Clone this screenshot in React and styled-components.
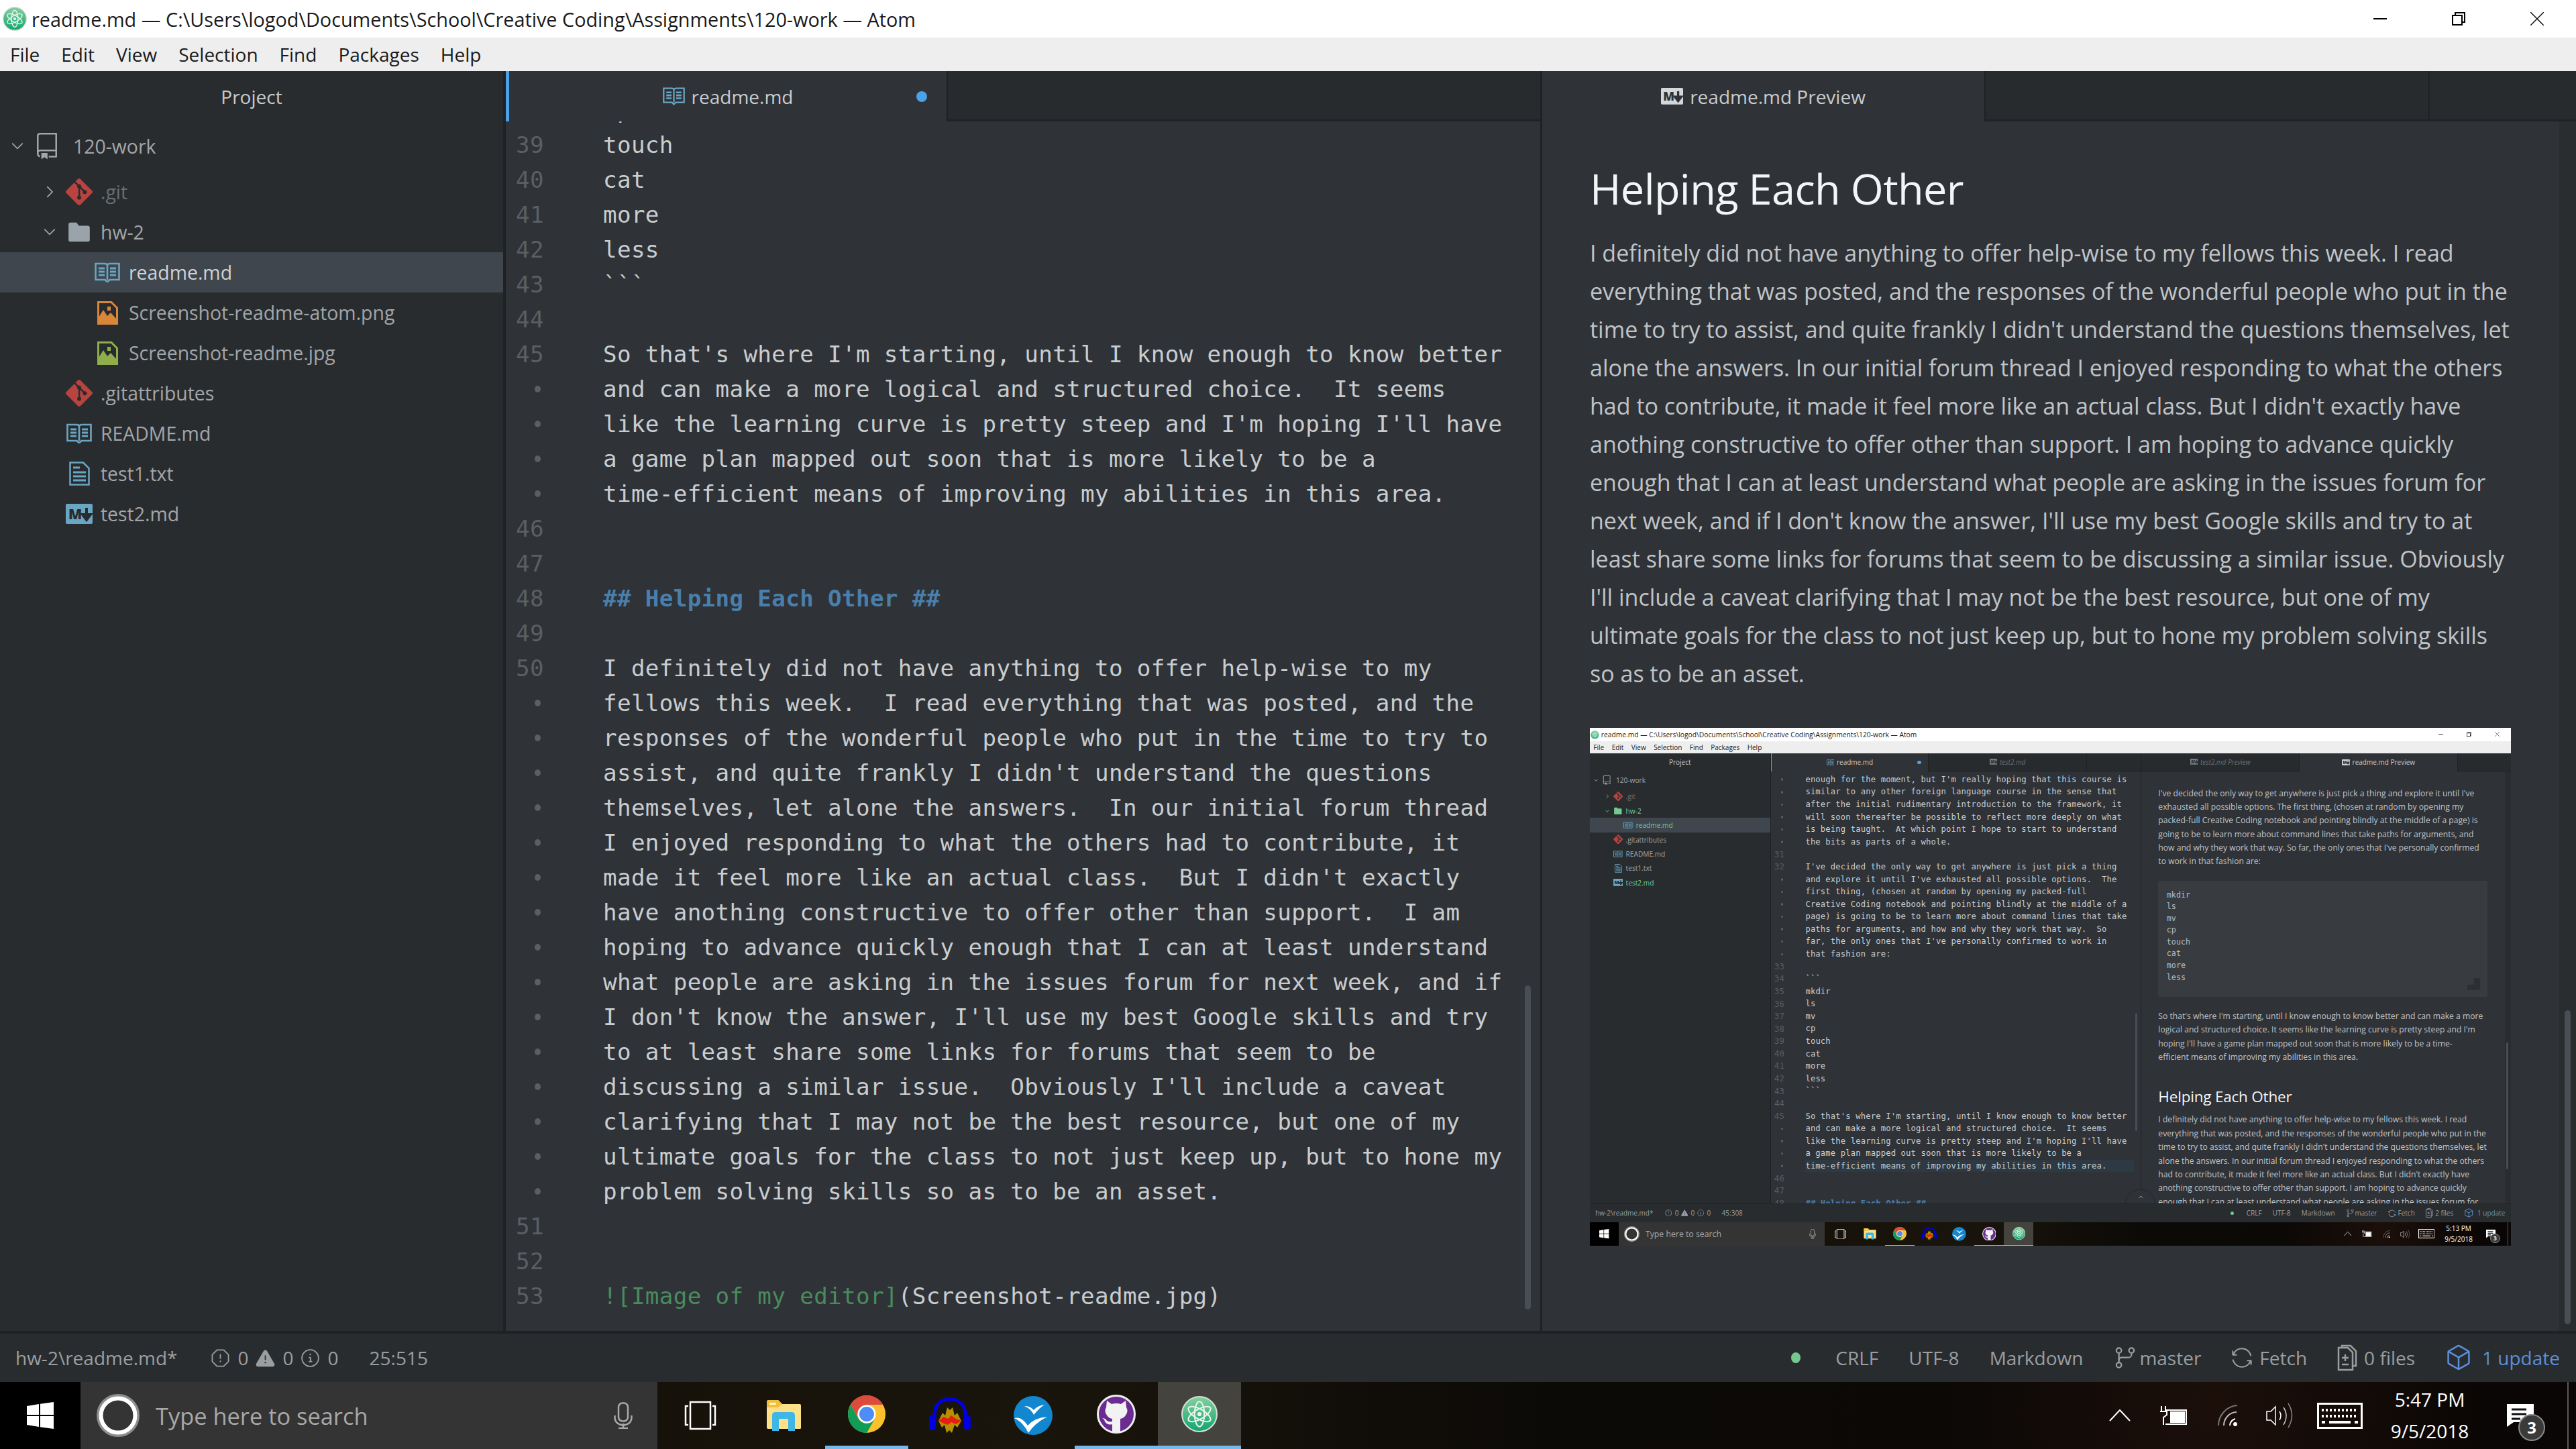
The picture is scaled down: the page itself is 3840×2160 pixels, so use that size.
import React from "react";
import styled, { createGlobalStyle } from "styled-components";
import {
  GoRepo, GoGitBranch, GoSync, GoPackage, GoStop, GoInfo, GoAlertFill,
  GoChevronDown, GoChevronRight, GoChevronUp, GoFileDirectoryFill,
} from "react-icons/go";
import { SiGit } from "react-icons/si";

const UI = `"Open Sans", "Noto Sans", sans-serif`;
const MONO = `"DejaVu Sans Mono", "Liberation Mono", monospace`;

const GlobalStyle = createGlobalStyle`
  html, body { margin: 0; padding: 0; background: #2f3237; }
  * { box-sizing: border-box; }
`;

/* ---------- window chrome ---------- */

const Desktop = styled.div`
  width: 3840px;
  height: 2160px;
  display: flex;
  flex-direction: column;
  overflow: hidden;
  font-family: ${UI};
`;

const TitleBar = styled.div`
  height: 56px;
  flex: none;
  background: #fff;
  display: flex;
  align-items: center;
  padding-left: 4px;
  color: #1a1a1a;
  font-size: 28.8px;
`;

const TitleText = styled.span`
  margin-left: 7px;
  white-space: pre;
  flex: 1;
`;

const WinButton = styled.div`
  width: 117px;
  height: 56px;
  display: flex;
  align-items: center;
  justify-content: center;
`;

const MenuBar = styled.div`
  height: 50px;
  flex: none;
  background: #eeeeee;
  display: flex;
  align-items: center;
  gap: 32px;
  padding-left: 15px;
  color: #1a1a1a;
  font-size: 28px;
`;

const Main = styled.div`
  flex: 1;
  min-height: 0;
  display: flex;
  position: relative;
`;

const Sidebar = styled.div`
  width: 754px;
  flex: none;
  background: #292c2f;
  border-right: 4px solid #1f2225;
  color: #a3a6a9;
  font-size: 28.4px;
`;

const SideTitle = styled.div`
  height: 75px;
  display: flex;
  align-items: center;
  justify-content: center;
  color: #c8cbcd;
  font-size: 28px;
  margin-bottom: 7px;
`;

const Row = styled.div`
  height: 60px;
  display: flex;
  align-items: center;
  padding-left: ${(p) => p.$indent}px;
  margin-bottom: ${(p) => (p.$root ? 8 : 0)}px;
  background: ${(p) => (p.$selected ? "#3f464d" : "transparent")};
  color: ${(p) => p.$color || "#a3a6a9"};
`;

const Twist = styled.span`
  width: 40px;
  flex: none;
  display: flex;
  justify-content: center;
  padding-right: 9px;
  color: ${(p) => p.$color || "#a3a6a9"};
`;

const RowIcon = styled.span`
  width: 40px;
  height: 40px;
  flex: none;
  display: flex;
  align-items: center;
  justify-content: center;
  color: ${(p) => p.$color};
`;

const RowLabel = styled.span`
  margin-left: ${(p) => (p.$root ? 19 : 12)}px;
  white-space: pre;
`;

const Pane = styled.div`
  width: ${(p) => p.$width}px;
  flex: ${(p) => (p.$width ? "none" : "1")};
  min-width: 0;
  display: flex;
  flex-direction: column;
  background: #2f3237;
  border-right: ${(p) => (p.$split ? "3px solid #1f2225" : "none")};
  position: relative;
`;

const TabBar = styled.div`
  height: 75px;
  flex: none;
  display: flex;
  background: #282b2e;
`;

const TabRest = styled.div`
  flex: 1;
  border-bottom: 3px solid #1f2225;
`;

const Tab = styled.div`
  width: ${(p) => p.$width}px;
  flex: none;
  position: relative;
  display: flex;
  align-items: center;
  justify-content: center;
  gap: 10px;
  font-size: 28px;
  color: ${(p) => (p.$active ? "#c8cbcd" : "#6a6e72")};
  font-style: ${(p) => (p.$active ? "normal" : "italic")};
  background: ${(p) => (p.$active ? "#2f3237" : "#282b2e")};
  border-bottom: ${(p) => (p.$active ? "none" : "3px solid #1f2225")};
  border-left: ${(p) => (p.$accent ? "5px solid #4aa3e8" : "none")};
  border-right: 2px solid #1f2225;
  white-space: pre;
`;

const TabDot = styled.span`
  position: absolute;
  right: 29px;
  top: 30px;
  width: 16px;
  height: 16px;
  border-radius: 50%;
  background: #4aa3e8;
`;

/* ---------- editor ---------- */

const Editor = styled.div`
  flex: 1;
  min-height: 0;
  overflow: hidden;
  position: relative;
  font-family: ${MONO};
  font-size: 34.2px;
  letter-spacing: 0.36px;
  color: #c9cdcf;
`;

const Lines = styled.div`
  margin-top: ${(p) => p.$offset}px;
`;

const Line = styled.div`
  height: 52px;
  display: flex;
  align-items: center;
  padding-right: 28px;
`;

const LineNo = styled.span`
  width: 57px;
  flex: none;
  text-align: right;
  color: #5b5f63;
`;

const WrapDot = styled.span`
  width: 52px;
  flex: none;
  display: flex;
  justify-content: flex-end;
  margin-right: 5px;
  &::after {
    content: "";
    width: 9px;
    height: 10px;
    border-radius: 50%;
    background: #5b5f63;
  }
`;

const Code = styled.span`
  flex: 1;
  height: 52px;
  line-height: 52px;
  margin-left: 88px;
  white-space: pre;
  background: ${(p) => (p.$highlight ? "#2e3a43" : "transparent")};
`;

const Token = styled.span`
  color: ${(p) => (p.$kind === "head" ? "#4a7fab" : p.$kind === "link" ? "#4a8b5d" : "inherit")};
  font-weight: ${(p) => (p.$kind === "head" ? 700 : 400)};
`;

const ScrollThumb = styled.div`
  position: absolute;
  right: ${(p) => p.$right}px;
  top: ${(p) => p.$top}px;
  height: ${(p) => p.$height}px;
  width: 9px;
  border-radius: 5px;
  background: #484e54;
`;

const PeekButton = styled.div`
  position: absolute;
  left: 2233px;
  bottom: 0;
  width: 126px;
  height: 60px;
  border-radius: 63px 63px 0 0;
  background: #2f3237;
  border: 2px solid #24272a;
  border-bottom: none;
  display: flex;
  justify-content: center;
  padding-top: 14px;
  color: #a3a6a9;
`;

/* ---------- preview ---------- */

const PreviewBody = styled.div`
  flex: 1;
  min-height: 0;
  display: flex;
`;

const PreviewScroll = styled.div`
  flex: 1;
  min-width: 0;
  overflow: hidden;
  padding: ${(p) => p.$top}px 0 0 71px;
  color: #c0c4c7;
  font-size: 34px;
`;

const H1 = styled.h1`
  margin: 96px 0 28px;
  font-size: 63px;
  line-height: 80px;
  font-weight: 400;
  color: #f4f5f6;
  white-space: pre;
  letter-spacing: -0.6px;
  &:first-child { margin-top: 0; }
`;

const Para = styled.p`
  margin: 0 0 52px;
`;

const ParaLine = styled.span`
  display: block;
  height: 57px;
  line-height: 57px;
  white-space: pre;
`;

const CodeBlock = styled.pre`
  position: relative;
  width: 1373px;
  height: 484px;
  margin: 0 0 52px;
  padding: 35px 0 0 35px;
  border-radius: 6px;
  background: #383c41;
  font-family: ${MONO};
  font-size: 32.6px;
  line-height: 49px;
  color: #b9bdc0;
`;

const CornerMark = styled.svg`
  position: absolute;
  right: 31px;
  bottom: 28px;
`;

const Shot = styled.div`
  width: 1373px;
  height: 772px;
  overflow: hidden;
`;

const ShotZoom = styled.div`
  zoom: 0.35755;
  filter: blur(1px);
`;

const ScrollTrack = styled.div`
  width: 25px;
  flex: none;
  background: #2a2d30;
  padding-top: ${(p) => p.$top}px;
`;

const TrackThumb = styled.div`
  width: 9px;
  height: ${(p) => p.$height}px;
  margin-left: 8px;
  border-radius: 5px;
  background: #484e54;
`;

/* ---------- status bar ---------- */

const StatusBar = styled.div`
  height: 76px;
  flex: none;
  background: #292c2f;
  border-top: 4px solid #1f2225;
  display: flex;
  align-items: center;
  padding: 0 24px 0 23px;
  color: #9a9ea1;
  font-size: 28px;
`;

const StatusLeft = styled.div`
  display: flex;
  align-items: center;
`;

const FileName = styled.span`
  margin-right: 49px;
  white-space: pre;
`;

const Counter = styled.span`
  display: flex;
  align-items: center;
  gap: 12px;
  margin-right: 10px;
`;

const Cursor = styled.span`
  margin-left: 36px;
`;

const StatusRight = styled.div`
  margin-left: auto;
  display: flex;
  align-items: center;
  gap: 45px;
`;

const GreenDot = styled.span`
  width: 14px;
  height: 16px;
  border-radius: 50%;
  background: #73c990;
  margin-right: 7px;
`;

const StatusItem = styled.span`
  display: flex;
  align-items: center;
  gap: ${(p) => p.$gap ?? 10}px;
  white-space: pre;
  color: ${(p) => p.$color || "inherit"};
`;

/* ---------- taskbar ---------- */

const Taskbar = styled.div`
  height: 100px;
  flex: none;
  display: flex;
  color: #fff;
  background:
    radial-gradient(circle at 3300px 40px, #1c0f0a 0, transparent 400px),
    linear-gradient(90deg, #0e0b06, #1a150c 40%, #0c0a07 60%, #0a0605);
`;

const StartButton = styled.div`
  width: 120px;
  flex: none;
  background: #000;
  display: flex;
  align-items: center;
  justify-content: center;
`;

const SearchBox = styled.div`
  width: 860px;
  flex: none;
  background: #343434;
  display: flex;
  align-items: center;
  padding-left: 24px;
  color: #a8a8a8;
  font-size: 34.4px;
`;

const SearchText = styled.span`
  margin-left: 24px;
  flex: 1;
  white-space: pre;
`;

const MicSlot = styled.span`
  width: 65px;
  flex: none;
  display: flex;
`;

const Slots = styled.div`
  display: flex;
  margin-left: 2px;
`;

const Slot = styled.div`
  width: 124px;
  height: 100px;
  position: relative;
  display: flex;
  align-items: center;
  justify-content: center;
  background: ${(p) => (p.$focused ? "#45433e" : "transparent")};
  border-bottom: ${(p) => (p.$open ? "5px solid #76b9ed" : "none")};
`;

const Tray = styled.div`
  margin-left: auto;
  display: flex;
  align-items: center;
`;

const TrayIcon = styled.span`
  width: ${(p) => p.$width}px;
  flex: none;
  display: flex;
  justify-content: ${(p) => (p.$end ? "flex-end" : "center")};
`;

const Clock = styled.div`
  width: 200px;
  flex: none;
  text-align: center;
  font-size: 28px;
  line-height: 47px;
`;

const Notify = styled.div`
  position: relative;
  width: 107px;
  height: 100px;
  flex: none;
  display: flex;
  align-items: center;
  padding-left: 15px;
  border-right: 2px solid #55585a;
  margin-right: 11px;
`;

const Badge = styled.span`
  position: absolute;
  left: 32px;
  top: 48px;
  width: 40px;
  height: 40px;
  border-radius: 50%;
  background: #3a3a3a;
  border: 2px solid #8a8a8a;
  color: #fff;
  font-size: 24px;
  font-weight: 700;
  line-height: 35px;
  text-align: center;
`;

/* ---------- drawn icons ---------- */

const AtomLogo = ({ size = 38, pale }) => (
  <svg width={size} height={size} viewBox="0 0 52 52">
    <defs>
      <linearGradient id="atomfill" x1="0" y1="0" x2="0" y2="1">
        <stop offset="0" stopColor={pale ? "#8ecb9c" : "#86cfa0"} />
        <stop offset="1" stopColor="#10a56f" />
      </linearGradient>
    </defs>
    <circle cx="26" cy="26" r="25" fill="url(#atomfill)" stroke="#d5dfd8" strokeWidth="2" />
    <g fill="none" stroke="#eaf5ec" strokeWidth="2">
      <ellipse cx="26" cy="26" rx="7" ry="18" />
      <ellipse cx="26" cy="26" rx="7" ry="18" transform="rotate(60 26 26)" />
      <ellipse cx="26" cy="26" rx="7" ry="18" transform="rotate(-60 26 26)" />
    </g>
    <circle cx="26" cy="26" r="3" fill="#eaf5ec" />
  </svg>
);

const BookMd = ({ width = 38, color = "#6aa5c2" }) => (
  <svg width={width} height={width * 0.8} viewBox="0 0 38 30.4" fill="none" stroke={color} strokeWidth="2.6">
    <path d="M1.5 2H15Q19 2 19 5Q19 2 23 2H36.5V26H22.5L19 29.5L15.5 26H1.5Z" />
    <path d="M19 5V26" />
    <path d="M6 9H15M6 14H15M6 19H15M23 9H32M23 14H32M23 19H32" strokeWidth="3" />
  </svg>
);

const ImageFile = ({ color }) => (
  <svg width="31" height="35" viewBox="0 0 31 35">
    <path d="M1.5 1.5H21L29.5 10V33.5H1.5Z" fill="none" stroke={color} strokeWidth="3" />
    <path d="M2 33V24L9 13L15 22L20 17L29 27V33Z" fill={color} />
    <rect x="15" y="8" width="5" height="6" fill={color} />
  </svg>
);

const TextFile = ({ color }) => (
  <svg width="31" height="36" viewBox="0 0 31 36">
    <path d="M1.5 1.5H21L29.5 10V34.5H1.5Z" fill="none" stroke={color} strokeWidth="2.5" />
    <path d="M6 9H16M6 16H25M6 22H25M6 28H25" stroke={color} strokeWidth="3" />
  </svg>
);

const MdBadge = ({ color = "#6aa5c2", width = 40, ink = "#292c2f" }) => (
  <svg width={width} height={width * 0.75} viewBox="0 0 40 30">
    <rect width="40" height="30" rx="2" fill={color} />
    <text x="4" y="23" fontFamily={UI} fontSize="21" fontWeight="800" fill={ink}>M</text>
    <path d="M31 6V18M25 16L31 24L37 16Z" stroke={ink} strokeWidth="4" fill={ink} />
  </svg>
);

const WindowsLogo = () => (
  <svg width="40" height="40" viewBox="0 0 40 40" fill="#fff">
    <path d="M0 6L18 3V19H0ZM20 2.7L40 0V19H20ZM0 21H18V37L0 34ZM20 21H40V40L20 37.3Z" />
  </svg>
);

const MicIcon = () => (
  <svg width="28" height="40" viewBox="0 0 28 40" fill="none" stroke="#a8a8a8" strokeWidth="2.5">
    <rect x="7" y="1.5" width="14" height="27" rx="6" />
    <path d="M1.5 20V23C1.5 38 26.5 38 26.5 23V20M14 32V39M7 39H21" />
  </svg>
);

const TaskViewIcon = () => (
  <svg width="48" height="44" viewBox="0 0 48 44" fill="none" stroke="#fff" strokeWidth="2.5">
    <rect x="9" y="2" width="30" height="40" />
    <path d="M6 8H2V36H6M42 8H46V36H42" />
  </svg>
);

const ExplorerIcon = () => (
  <svg width="52" height="46" viewBox="0 0 52 46">
    <path d="M1 3Q1 0 4 0H18L24 6H50Q52 6 52 8V42Q52 43 50 43H3Q1 43 1 41Z" fill="#fde188" />
    <path d="M1 3Q1 0 4 0H18L24 6L18 11H1Z" fill="#f2bf3c" />
    <rect x="5" y="4" width="10" height="3" fill="#fff5c8" />
    <path d="M9 46V23Q9 18 14 18H38Q43 18 43 23V46H33V28H19V46Z" fill="#3fb6e6" />
  </svg>
);

const ChromeIcon = () => (
  <svg width="56" height="56" viewBox="0 0 56 56">
    <circle cx="28" cy="28" r="28" fill="#fbc02d" />
    <path d="M28 0A28 28 0 0 1 52.2 14H28A14 14 0 0 0 15.9 35L3.8 14A28 28 0 0 1 28 0Z" fill="#db4c3f" />
    <path d="M3.8 14A28 28 0 0 0 28 56L40.1 35A14 14 0 0 1 15.9 35Z" fill="#0f9d58" />
    <circle cx="28" cy="28" r="13.5" fill="#fff" />
    <circle cx="28" cy="28" r="11" fill="#4e8df5" />
  </svg>
);

const AudacityIcon = () => (
  <svg width="62" height="56" viewBox="0 0 62 56">
    <path d="M8 36V26C8 -4 54 -4 54 26V36" fill="none" stroke="#0000e0" strokeWidth="5" />
    <rect x="0" y="27" width="10" height="23" rx="5" fill="#0000e0" />
    <rect x="52" y="27" width="10" height="23" rx="5" fill="#0000e0" />
    <path d="M14 36L20 24L24 28L27 16L31 20L35 16L38 28L42 24L48 36L42 46L38 42L34 54L30 50L26 54L23 42L19 46Z" fill="#b79000" />
    <path d="M14 36L22 30L28 33L33 28L40 33L48 36L40 41L33 38L28 42L22 40Z" fill="#e81c12" />
  </svg>
);

const OfficeIcon = () => (
  <svg width="58" height="58" viewBox="0 0 58 58">
    <circle cx="29" cy="29" r="29" fill="#1286cf" />
    <path d="M16 15Q24 14 30 21Q36 14 46 13Q38 18 30 28Q26 19 16 15Z" fill="#fff" />
    <path d="M1 33Q12 30 21 44Q32 32 50 31Q32 40 22 55Q14 39 1 33Z" fill="#fff" />
  </svg>
);

const GithubIcon = () => (
  <svg width="58" height="58" viewBox="0 0 58 58">
    <circle cx="29" cy="29" r="27.5" fill="#6b2c91" stroke="#eee" strokeWidth="3" />
    <path d="M15 9L22 14Q29 12 36 14L43 9L44 19Q47 24 44 29Q41 35 35 36V56H23V44Q16 46 12 40Q11 36 8 35Q13 35 15 39Q18 41 23 40V36Q17 35 14 29Q11 24 14 19Z" fill="#f2f2f2" />
  </svg>
);

const CaretIcon = () => (
  <svg width="32" height="18" viewBox="0 0 32 18" fill="none" stroke="#fff" strokeWidth="2">
    <path d="M1 17L16 1L31 17" />
  </svg>
);

const BatteryIcon = () => (
  <svg width="40" height="28" viewBox="0 0 40 28" fill="none" stroke="#fff" strokeWidth="2">
    <path d="M8 6H39V27H8" />
    <rect x="15" y="8" width="22" height="17" fill="#fff" stroke="none" />
    <path d="M2 0V8M8 0V8M0 8H10V13L5 17L5 28" />
  </svg>
);

const WifiIcon = () => (
  <svg width="34" height="32" viewBox="0 0 34 32" fill="none">
    <path d="M2 31C2 16 14 2 30 1" stroke="#777" strokeWidth="2" />
    <path d="M10 31C10 21 18 11 29 11" stroke="#bbb" strokeWidth="2" />
    <path d="M19 31C19 26 23 22 27 21" stroke="#fff" strokeWidth="2" />
    <circle cx="27" cy="29" r="3" fill="#fff" />
  </svg>
);

const SpeakerIcon = () => (
  <svg width="42" height="38" viewBox="0 0 42 38" fill="none" stroke="#fff" strokeWidth="1.5">
    <path d="M1 13H7L14 6V33L7 26H1Z" />
    <path d="M20 13Q24 19 20 26" />
    <path d="M26 7Q34 19 26 33" stroke="#ccc" />
    <path d="M33 1Q44 19 33 37" stroke="#888" />
  </svg>
);

const KeyboardIcon = () => (
  <svg width="68" height="39" viewBox="0 0 68 39" fill="none" stroke="#fff">
    <rect x="1.5" y="1.5" width="65" height="36" strokeWidth="3" />
    <path d="M7 11H61M7 20H61" strokeWidth="4" strokeDasharray="3 3" />
    <path d="M7 29H12M18 29H50M56 29H61" strokeWidth="4" />
  </svg>
);

const NotifyIcon = () => (
  <svg width="40" height="34" viewBox="0 0 40 34">
    <path d="M0 0H40V27H10L0 34Z" fill="#fff" />
    <path d="M7 8H29M7 15H29M7 22H20" stroke="#111" strokeWidth="3" />
  </svg>
);

const StatusFileIcon = () => (
  <svg width="30" height="40" viewBox="0 0 30 40" fill="none" stroke="#9a9ea1" strokeWidth="2.5">
    <path d="M7 5V2H20L28 10V32H23" />
    <path d="M2 5H16L23 12V38H2Z" />
    <path d="M12 15V25M7 20H17M7 30H17" />
  </svg>
);

const Cortana = () => (
  <svg width="64" height="64" viewBox="0 0 64 64" fill="none">
    <circle cx="32" cy="32" r="30" stroke="#8e8e8e" strokeWidth="4" />
    <circle cx="32" cy="32" r="25.5" stroke="#fff" strokeWidth="6" />
  </svg>
);

const FileIcon = ({ kind, color }) => {
  if (kind === "git") return <SiGit size={40} color="#b8433f" />;
  if (kind === "folder") return <GoFileDirectoryFill size={38} color={color || "#9aa3a9"} />;
  if (kind === "book") return <BookMd color={color || "#6aa5c2"} />;
  if (kind === "png") return <ImageFile color="#d9863a" />;
  if (kind === "jpg") return <ImageFile color="#8fae4a" />;
  if (kind === "txt") return <TextFile color="#6aa5c2" />;
  return <MdBadge />;
};

/* ---------- data ---------- */

const para = (n, rows) => rows.map((t, i) => ({ n: i === 0 ? n : null, t }));

const mainLines = [
  { n: 38, t: "cp" }, { n: 39, t: "touch" }, { n: 40, t: "cat" }, { n: 41, t: "more" },
  { n: 42, t: "less" }, { n: 43, t: "```" }, { n: 44, t: "" },
  ...para(45, [
    "So that's where I'm starting, until I know enough to know better",
    "and can make a more logical and structured choice.  It seems",
    "like the learning curve is pretty steep and I'm hoping I'll have",
    "a game plan mapped out soon that is more likely to be a",
    "time-efficient means of improving my abilities in this area.",
  ]),
  { n: 46, t: "" }, { n: 47, t: "" },
  { n: 48, t: [["## Helping Each Other ##", "head"]] },
  { n: 49, t: "" },
  ...para(50, [
    "I definitely did not have anything to offer help-wise to my",
    "fellows this week.  I read everything that was posted, and the",
    "responses of the wonderful people who put in the time to try to",
    "assist, and quite frankly I didn't understand the questions",
    "themselves, let alone the answers.  In our initial forum thread",
    "I enjoyed responding to what the others had to contribute, it",
    "made it feel more like an actual class.  But I didn't exactly",
    "have anothing constructive to offer other than support.  I am",
    "hoping to advance quickly enough that I can at least understand",
    "what people are asking in the issues forum for next week, and if",
    "I don't know the answer, I'll use my best Google skills and try",
    "to at least share some links for forums that seem to be",
    "discussing a similar issue.  Obviously I'll include a caveat",
    "clarifying that I may not be the best resource, but one of my",
    "ultimate goals for the class to not just keep up, but to hone my",
    "problem solving skills so as to be an asset.",
  ]),
  { n: 51, t: "" }, { n: 52, t: "" },
  { n: 53, t: [["![Image of my editor]", "link"], ["(Screenshot-readme.jpg)", "text"]] },
];

const shotLines = [
  ...para(null, [
    "enough for the moment, but I'm really hoping that this course is",
    "similar to any other foreign language course in the sense that",
    "after the initial rudimentary introduction to the framework, it",
    "will soon thereafter be possible to reflect more deeply on what",
    "is being taught.  At which point I hope to start to understand",
    "the bits as parts of a whole.",
  ]),
  { n: 31, t: "" },
  ...para(32, [
    "I've decided the only way to get anywhere is just pick a thing",
    "and explore it until I've exhausted all possible options.  The",
    "first thing, (chosen at random by opening my packed-full",
    "Creative Coding notebook and pointing blindly at the middle of a",
    "page) is going to be to learn more about command lines that take",
    "paths for arguments, and how and why they work that way.  So",
    "far, the only ones that I've personally confirmed to work in",
    "that fashion are:",
  ]),
  { n: 33, t: "" }, { n: 34, t: "```" }, { n: 35, t: "mkdir" }, { n: 36, t: "ls" },
  { n: 37, t: "mv" }, { n: 38, t: "cp" }, { n: 39, t: "touch" }, { n: 40, t: "cat" },
  { n: 41, t: "more" }, { n: 42, t: "less" }, { n: 43, t: "```" }, { n: 44, t: "" },
  ...para(45, [
    "So that's where I'm starting, until I know enough to know better",
    "and can make a more logical and structured choice.  It seems",
    "like the learning curve is pretty steep and I'm hoping I'll have",
    "a game plan mapped out soon that is more likely to be a",
  ]),
  { n: null, t: "time-efficient means of improving my abilities in this area.", highlight: true },
  { n: 46, t: "" }, { n: 47, t: "" },
  { n: 48, t: [["## Helping Each Other ##", "head"]] },
];

const helpingRows = [
  "I definitely did not have anything to offer help-wise to my fellows this week. I read",
  "everything that was posted, and the responses of the wonderful people who put in the",
  "time to try to assist, and quite frankly I didn't understand the questions themselves, let",
  "alone the answers. In our initial forum thread I enjoyed responding to what the others",
  "had to contribute, it made it feel more like an actual class. But I didn't exactly have",
  "anothing constructive to offer other than support. I am hoping to advance quickly",
  "enough that I can at least understand what people are asking in the issues forum for",
  "next week, and if I don't know the answer, I'll use my best Google skills and try to at",
  "least share some links for forums that seem to be discussing a similar issue. Obviously",
  "I'll include a caveat clarifying that I may not be the best resource, but one of my",
  "ultimate goals for the class to not just keep up, but to hone my problem solving skills",
  "so as to be an asset.",
];

const green = "#73c990";

const workTree = [
  { label: "120-work", icon: "repo", open: true, indent: 10, root: true },
  { label: ".git", icon: "git", open: false, indent: 58, color: "#6a6e72" },
  { label: "hw-2", icon: "folder", open: true, indent: 58 },
  { label: "readme.md", icon: "book", indent: 100, selected: true, color: "#d0d3d5" },
  { label: "Screenshot-readme-atom.png", icon: "png", indent: 100 },
  { label: "Screenshot-readme.jpg", icon: "jpg", indent: 100 },
  { label: ".gitattributes", icon: "git", indent: 58 },
  { label: "README.md", icon: "book", indent: 58 },
  { label: "test1.txt", icon: "txt", indent: 58 },
  { label: "test2.md", icon: "md", indent: 58 },
];

const shotTree = [
  { label: "120-work", icon: "repo", open: true, indent: 10, root: true },
  { label: ".git", icon: "git", open: false, indent: 58, color: "#6a6e72" },
  { label: "hw-2", icon: "folder", open: true, indent: 58, color: green, tint: green },
  { label: "readme.md", icon: "book", indent: 100, selected: true, color: green },
  { label: ".gitattributes", icon: "git", indent: 58 },
  { label: "README.md", icon: "book", indent: 58 },
  { label: "test1.txt", icon: "txt", indent: 58 },
  { label: "test2.md", icon: "md", indent: 58, color: green },
];

const shotScreen = {
  tree: shotTree,
  editorTabs: [
    { label: "readme.md", icon: "book", active: true, dot: true, accent: true },
    { label: "test2.md", icon: "md" },
  ],
  previewTabs: [
    { label: "test2.md Preview", icon: "md", width: 661 },
    { label: "readme.md Preview", icon: "md", active: true, width: 659 },
  ],
  lines: shotLines,
  lineOffset: 9,
  editorThumb: { top: 1007, height: 492 },
  previewTop: 64,
  blocks: [
    { kind: "p", rows: [
      "I've decided the only way to get anywhere is just pick a thing and explore it until I've",
      "exhausted all possible options. The first thing, (chosen at random by opening my",
      "packed-full Creative Coding notebook and pointing blindly at the middle of a page) is",
      "going to be to learn more about command lines that take paths for arguments, and",
      "how and why they work that way. So far, the only ones that I've personally confirmed",
      "to work in that fashion are:",
    ] },
    { kind: "code", text: "mkdir\nls\nmv\ncp\ntouch\ncat\nmore\nless" },
    { kind: "p", rows: [
      "So that's where I'm starting, until I know enough to know better and can make a more",
      "logical and structured choice. It seems like the learning curve is pretty steep and I'm",
      "hoping I'll have a game plan mapped out soon that is more likely to be a time-",
      "efficient means of improving my abilities in this area.",
    ] },
    { kind: "h1", text: "Helping Each Other" },
    { kind: "p", rows: helpingRows },
  ],
  trackTop: 0,
  trackHeight: 0,
  innerThumb: { top: 1130, height: 529 },
  peek: true,
  cursor: "45:308",
  files: "2 files",
  time: "5:13 PM",
};

const mainScreen = {
  tree: workTree,
  editorTabs: [{ label: "readme.md", icon: "book", active: true, dot: true, accent: true }],
  previewTabs: [
    { label: "readme.md Preview", icon: "md", active: true, width: 661 },
    { label: "", blank: true, width: 662 },
  ],
  lines: mainLines,
  lineOffset: -43,
  editorThumb: { top: 1288, height: 483 },
  previewTop: 60,
  blocks: [
    { kind: "h1", text: "Helping Each Other" },
    { kind: "p", rows: helpingRows },
    { kind: "shot" },
  ],
  trackTop: 1325,
  trackHeight: 468,
  cursor: "25:515",
  files: "0 files",
  time: "5:47 PM",
};

const taskApps = [
  { key: "view", el: <TaskViewIcon /> },
  { key: "explorer", el: <ExplorerIcon /> },
  { key: "chrome", el: <ChromeIcon />, open: true },
  { key: "audacity", el: <AudacityIcon /> },
  { key: "office", el: <OfficeIcon /> },
  { key: "github", el: <GithubIcon />, open: true },
  { key: "atom", el: <AtomLogo size={54} pale />, open: true, focused: true },
];

const menus = ["File", "Edit", "View", "Selection", "Find", "Packages", "Help"];

/* ---------- components ---------- */

const TreeRow = ({ item }) => (
  <Row $indent={item.indent} $selected={item.selected} $root={item.root} $color={item.color}>
    <Twist $color={item.tint}>
      {item.open === true && <GoChevronDown size={28} />}
      {item.open === false && <GoChevronRight size={28} />}
    </Twist>
    <RowIcon $color="#a3a6a9">
      {item.icon === "repo" ? <GoRepo size={40} /> : <FileIcon kind={item.icon} color={item.tint} />}
    </RowIcon>
    <RowLabel $root={item.root}>{item.label}</RowLabel>
  </Row>
);

const TabItem = ({ tab }) => (
  <Tab $width={tab.width || 659} $active={tab.active} $accent={tab.accent}>
    {tab.icon === "book" && <BookMd width={33} />}
    {tab.icon === "md" && (
      <MdBadge width={33} color={tab.active ? "#d4d7d9" : "#7a7e82"} ink="#2f3237" />
    )}
    {tab.label}
    {tab.dot && <TabDot />}
  </Tab>
);

const EditorLine = ({ line }) => (
  <Line>
    {line.n ? <LineNo>{line.n}</LineNo> : <WrapDot />}
    <Code $highlight={line.highlight}>
      {Array.isArray(line.t)
        ? line.t.map(([text, kind]) => <Token key={text} $kind={kind}>{text}</Token>)
        : line.t}
    </Code>
  </Line>
);

const Block = ({ block }) => {
  if (block.kind === "h1") return <H1>{block.text}</H1>;
  if (block.kind === "shot") {
    return (
      <Shot>
        <ShotZoom>
          <Workbench screen={shotScreen} />
        </ShotZoom>
      </Shot>
    );
  }
  if (block.kind === "code") {
    return (
      <CodeBlock>
        {block.text}
        <CornerMark width="54" height="53" viewBox="0 0 54 53">
          <path d="M27 0H54V53H0V27H27Z" fill="#2c2f33" />
        </CornerMark>
      </CodeBlock>
    );
  }
  return (
    <Para>
      {block.rows.map((row) => <ParaLine key={row}>{row}</ParaLine>)}
    </Para>
  );
};

const Workbench = ({ screen }) => (
  <Desktop>
    <TitleBar>
      <AtomLogo size={36} />
      <TitleText>{"readme.md — C:\\Users\\logod\\Documents\\School\\Creative Coding\\Assignments\\120-work — Atom"}</TitleText>
      <WinButton>
        <svg width="20" height="20" viewBox="0 0 20 20"><path d="M0 10H20" stroke="#000" strokeWidth="2" /></svg>
      </WinButton>
      <WinButton>
        <svg width="20" height="20" viewBox="0 0 20 20" fill="none" stroke="#000" strokeWidth="2">
          <rect x="1" y="5" width="14" height="14" />
          <path d="M5 5V1H19V15H15" />
        </svg>
      </WinButton>
      <WinButton>
        <svg width="20" height="20" viewBox="0 0 20 20"><path d="M0 0L20 20M20 0L0 20" stroke="#111" strokeWidth="1.5" /></svg>
      </WinButton>
    </TitleBar>
    <MenuBar>
      {menus.map((m) => <span key={m}>{m}</span>)}
    </MenuBar>
    <Main>
      <Sidebar>
        <SideTitle>Project</SideTitle>
        {screen.tree.map((item) => <TreeRow key={item.label} item={item} />)}
      </Sidebar>
      <Pane $width={1545} $split>
        <TabBar>
          {screen.editorTabs.map((t) => <TabItem key={t.label} tab={t} />)}
          <TabRest />
        </TabBar>
        <Editor>
          <Lines $offset={screen.lineOffset}>
            {screen.lines.map((line, i) => <EditorLine key={i} line={line} />)}
          </Lines>
          <ScrollThumb $right={14} $top={screen.editorThumb.top} $height={screen.editorThumb.height} />
        </Editor>
      </Pane>
      <Pane>
        <TabBar>
          {screen.previewTabs.map((t) => <TabItem key={t.label} tab={t} />)}
          <TabRest />
        </TabBar>
        <PreviewBody>
          <PreviewScroll $top={screen.previewTop}>
            {screen.blocks.map((b, i) => <Block key={i} block={b} />)}
          </PreviewScroll>
          <ScrollTrack $top={screen.trackTop}>
            {screen.trackHeight > 0 && <TrackThumb $height={screen.trackHeight} />}
          </ScrollTrack>
          {screen.innerThumb && (
            <ScrollThumb $right={10} $top={screen.innerThumb.top + 75} $height={screen.innerThumb.height} />
          )}
        </PreviewBody>
      </Pane>
      {screen.peek && (
        <PeekButton>
          <GoChevronUp size={30} />
        </PeekButton>
      )}
    </Main>
    <StatusBar>
      <StatusLeft>
        <FileName>{"hw-2\\readme.md*"}</FileName>
        <Counter><GoStop size={29} />0</Counter>
        <Counter><GoAlertFill size={29} />0</Counter>
        <Counter><GoInfo size={29} />0</Counter>
        <Cursor>{screen.cursor}</Cursor>
      </StatusLeft>
      <StatusRight>
        <GreenDot />
        <StatusItem>CRLF</StatusItem>
        <StatusItem>UTF-8</StatusItem>
        <StatusItem>Markdown</StatusItem>
        <StatusItem $gap={3}><GoGitBranch size={36} />master</StatusItem>
        <StatusItem><GoSync size={32} />Fetch</StatusItem>
        <StatusItem><StatusFileIcon />{screen.files}</StatusItem>
        <StatusItem $color="#5b8fd9" $gap={15}><GoPackage size={40} />1 update</StatusItem>
      </StatusRight>
    </StatusBar>
    <Taskbar>
      <StartButton><WindowsLogo /></StartButton>
      <SearchBox>
        <Cortana />
        <SearchText>Type here to search</SearchText>
        <MicSlot><MicIcon /></MicSlot>
      </SearchBox>
      <Slots>
        {taskApps.map((app) => (
          <Slot key={app.key} $open={app.open} $focused={app.focused}>{app.el}</Slot>
        ))}
      </Slots>
      <Tray>
        <TrayIcon $width={80}><CaretIcon /></TrayIcon>
        <TrayIcon $width={80}><BatteryIcon /></TrayIcon>
        <TrayIcon $width={84}><WifiIcon /></TrayIcon>
        <TrayIcon $width={70}><SpeakerIcon /></TrayIcon>
        <TrayIcon $width={88} $end><KeyboardIcon /></TrayIcon>
        <Clock>{screen.time}<br />9/5/2018</Clock>
        <Notify>
          <NotifyIcon />
          <Badge>3</Badge>
        </Notify>
      </Tray>
    </Taskbar>
  </Desktop>
);

export default function App() {
  return (
    <>
      <GlobalStyle />
      <Workbench screen={mainScreen} />
    </>
  );
}
